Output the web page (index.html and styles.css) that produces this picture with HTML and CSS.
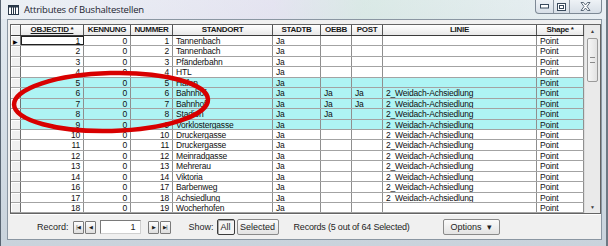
FILE: index.html
```html
<!DOCTYPE html>
<html lang="de">
<head>
    <meta charset="UTF-8">
    <title>Attributes of Bushaltestellen</title>
    <link rel="stylesheet" href="styles.css">
</head>
<body>

    <div class="window">
        <!-- Title bar -->
        <div class="titlebar">
            <svg class="app-icon" width="11" height="10" viewBox="0 0 11 10">
                <rect x="0.5" y="0.5" width="10" height="9" fill="#fff" stroke="#2b3a4a"/>
                <rect x="0.5" y="0.5" width="10" height="2" fill="#2b3a4a"/>
                <line x1="3.5" y1="2" x2="3.5" y2="9.5" stroke="#2b3a4a"/>
                <line x1="5.5" y1="2" x2="5.5" y2="9.5" stroke="#2b3a4a"/>
                <line x1="7.5" y1="2" x2="7.5" y2="9.5" stroke="#2b3a4a"/>
            </svg>
            <span class="title">Attributes of Bushaltestellen</span>
            <div class="caption-buttons">
                <div class="cap-btn cap-min">
                    <svg width="9" height="5" viewBox="0 0 9 5"><rect x="0.5" y="0.5" width="8" height="3.5" fill="#fff" stroke="#394a5c"/></svg>
                </div>
                <div class="cap-btn cap-max">
                    <svg width="9" height="8" viewBox="0 0 9 8"><rect x="0.5" y="0.5" width="8" height="7" fill="#fff" stroke="#394a5c"/><rect x="2.5" y="2.5" width="4" height="3" fill="none" stroke="#394a5c"/></svg>
                </div>
                <div class="cap-btn cap-close">
                    <svg width="11" height="9" viewBox="0 0 11 9"><path d="M1 0.5 L3.5 0.5 L5.5 3 L7.5 0.5 L10 0.5 L7 4.5 L10 8.5 L7.5 8.5 L5.5 6 L3.5 8.5 L1 8.5 L4 4.5 Z" fill="#fff" stroke="#394a5c" stroke-width="0.8"/></svg>
                </div>
            </div>
        </div>

        <!-- Client area -->
        <div class="client">
            <div class="grid-frame">
                <div class="grid">
                    <div class="row head">
                        <div class="cell sel"></div>
                        <div class="cell sorted">OBJECTID *</div>
                        <div class="cell">KENNUNG</div>
                        <div class="cell">NUMMER</div>
                        <div class="cell">STANDORT</div>
                        <div class="cell">STADTB</div>
                        <div class="cell">OEBB</div>
                        <div class="cell">POST</div>
                        <div class="cell">LINIE</div>
                        <div class="cell">Shape *</div>
                    </div>
                    <div class="rows" id="rows"></div>
                </div>
                <div class="vscroll">
                    <div class="sb-arrow">&#9650;</div>
                    <div class="sb-track">
                        <div class="sb-thumb"><span class="grip"></span></div>
                    </div>
                    <div class="sb-arrow">&#9660;</div>
                </div>
            </div>

            <div class="toolbar">
                <span class="label">Record:</span>
                <span class="nav-btn">|&#9664;</span>
                <span class="nav-btn">&#9664;</span>
                <span class="rec-input">1</span>
                <span class="nav-btn">&#9654;</span>
                <span class="nav-btn">&#9654;|</span>
                <span class="label show-label">Show:</span>
                <span class="tb-btn pressed">All</span>
                <span class="tb-btn sel-btn">Selected</span>
                <span class="records">Records (5 out of 64 Selected)</span>
                <span class="tb-btn options">Options &nbsp;&#9662;</span>
            </div>
        </div>
    </div>

    <!-- red marker drawn over the table -->
    <svg class="marker" width="608" height="246" viewBox="0 0 608 246">
        <ellipse cx="111" cy="102" rx="97" ry="29" fill="none" stroke="#d80000" stroke-width="4.5" transform="rotate(-1.5 111 102)"/>
    </svg>

    <script>
        var data = [
            [1, 0, 1, "Tannenbach", "Ja", "", "", "", "Point"],
            [2, 0, 2, "Tannenbach", "Ja", "", "", "", "Point"],
            [3, 0, 3, "Pfänderbahn", "Ja", "", "", "", "Point"],
            [4, 0, 4, "HTL", "Ja", "", "", "", "Point"],
            [5, 0, 5, "Hafen", "Ja", "", "", "", "Point"],
            [6, 0, 6, "Bahnhof", "Ja", "Ja", "Ja", "2_Weidach-Achsiedlung", "Point"],
            [7, 0, 7, "Bahnhof", "Ja", "Ja", "Ja", "2_Weidach-Achsiedlung", "Point"],
            [8, 0, 8, "Stadion", "Ja", "Ja", "", "2_Weidach-Achsiedlung", "Point"],
            [9, 0, 9, "Vorklostergasse", "Ja", "", "", "2_Weidach-Achsiedlung", "Point"],
            [10, 0, 10, "Druckergasse", "Ja", "", "", "2_Weidach-Achsiedlung", "Point"],
            [11, 0, 11, "Druckergasse", "Ja", "", "", "2_Weidach-Achsiedlung", "Point"],
            [12, 0, 12, "Meinradgasse", "Ja", "", "", "2_Weidach-Achsiedlung", "Point"],
            [13, 0, 13, "Mehrerau", "Ja", "", "", "2_Weidach-Achsiedlung", "Point"],
            [14, 0, 14, "Viktoria", "Ja", "", "", "2_Weidach-Achsiedlung", "Point"],
            [16, 0, 17, "Barbenweg", "Ja", "", "", "2_Weidach-Achsiedlung", "Point"],
            [17, 0, 18, "Achsiedlung", "Ja", "", "", "2_Weidach-Achsiedlung", "Point"],
            [18, 0, 19, "Wocherhofen", "Ja", "", "", "", "Point"],
            ["", "", "", "", "", "", "", "", ""]
        ];
        var selected = [5, 6, 7, 8, 9];

        var html = "";
        data.forEach(function(r, i) {
            var cls = "row" + (selected.indexOf(r[0]) >= 0 ? " picked" : "");
            html += '<div class="' + cls + '">' +
                '<div class="cell sel">' + (i === 0 ? '<span class="cur">&#9654;</span>' : '') + '</div>' +
                '<div class="cell num' + (i === 0 ? ' focus' : '') + '">' + r[0] + '</div>' +
                '<div class="cell num">' + r[1] + '</div>' +
                '<div class="cell num">' + r[2] + '</div>' +
                '<div class="cell">' + r[3] + '</div>' +
                '<div class="cell">' + r[4] + '</div>' +
                '<div class="cell">' + r[5] + '</div>' +
                '<div class="cell">' + r[6] + '</div>' +
                '<div class="cell">' + r[7] + '</div>' +
                '<div class="cell">' + r[8] + '</div>' +
                '</div>';
        });
        document.getElementById("rows").innerHTML = html;
    </script>

</body>
</html>
```

FILE: styles.css
```css
body {
    margin: 0;
    font-family: "Liberation Sans", Arial, sans-serif;
    position: relative;
    width: 608px;
    height: 246px;
    overflow: hidden;
}

.window {
    width: 608px;
    height: 246px;
    box-sizing: border-box;
    display: flex;
    flex-direction: column;
    background: linear-gradient(180deg, #e4ebf1 0%, #d8e1e9 40%, #c9d3dc 100%);
    border-left: 1px solid #596572;
    border-right: 2px solid #6d7883;
}

/* Title bar */
.titlebar {
    height: 19px;
    display: flex;
    align-items: center;
    padding-left: 7px;
    background: linear-gradient(90deg, rgba(255,255,255,0.3) 0%, rgba(230,215,240,0.35) 45%, rgba(200,230,210,0.35) 60%, rgba(255,255,255,0.2) 100%);
}

.app-icon {
    margin-right: 5px;
}

.title {
    font-family: "Open Sans", "Liberation Sans", sans-serif;
    font-size: 9.5px;
    letter-spacing: -0.2px;
    color: #1c2430;
}

.caption-buttons {
    margin-left: auto;
    margin-right: 4px;
    align-self: flex-start;
    display: flex;
    height: 13px;
    border: 1px solid #7d8995;
    border-top: none;
    border-radius: 0 0 4px 4px;
    background: linear-gradient(180deg, #eef2f6, #d7dfe7);
}

.cap-btn {
    display: flex;
    align-items: center;
    justify-content: center;
}

.cap-min {
    width: 17px;
    border-right: 1px solid #8994a0;
}

.cap-max {
    width: 15px;
    border-right: 1px solid #8994a0;
}

.cap-close {
    width: 31px;
}

/* Client area */
.client {
    flex: 1;
    margin: 0 4px 6px 6px;
    border: 1px solid #8a96a2;
    background: #f0f0f0;
    display: flex;
    flex-direction: column;
    padding: 4px 0 0 2px;
}

.grid-frame {
    height: 190px;
    box-sizing: border-box;
    border: 1px solid #646464;
    background: #fff;
    display: flex;
    overflow: hidden;
}

.grid {
    width: 573px;
    overflow: hidden;
}

.rows {
    height: 178px;
    overflow: hidden;
}

.row {
    display: grid;
    grid-template-columns: 10px 63px 47px 42px 100px 48px 31px 31px 154px 47px;
    height: 10.45px;
    box-sizing: border-box;
    border-bottom: 1px solid #a3a3a3;
    font-size: 8.5px;
    letter-spacing: -0.2px;
    line-height: 10px;
    color: #101010;
}

.row.picked {
    background: #aef4f4;
}

.cell {
    border-right: 1px solid #8f8f8f;
    padding: 0 3px;
    white-space: nowrap;
    overflow: hidden;
}

.cell.num {
    text-align: right;
}

.cell.sel {
    padding: 0;
    background: #f0f0f0;
    border-right: 1px solid #707070;
    box-shadow: inset 1px 1px 0 #fff;
    position: relative;
}

.cell.focus {
    outline: 1px solid #202020;
    outline-offset: -1px;
}

.cur {
    position: absolute;
    left: 2px;
    top: 1px;
    font-size: 6px;
    color: #000;
}

.row.head {
    height: 11px;
    border-bottom: 1px solid #3a3a3a;
    font-size: 8px;
    font-weight: bold;
    letter-spacing: -0.3px;
    line-height: 10px;
    color: #1a1a1a;
}

.row.head .cell {
    text-align: center;
    background: linear-gradient(180deg, #ffffff, #e8e8e8);
    border-right: 1px solid #555;
}

.row.head .cell.sel {
    background: #f0f0f0;
}

.row.head .cell.sorted {
    text-decoration: underline;
}

/* Vertical scroll bar */
.vscroll {
    flex: 1;
    display: flex;
    flex-direction: column;
    background: #eaeaea;
    border-left: 1px solid #dcdcdc;
}

.sb-arrow {
    height: 12px;
    font-size: 5px;
    color: #404040;
    display: flex;
    align-items: center;
    justify-content: center;
}

.sb-track {
    flex: 1;
    padding: 1px 2px;
}

.sb-thumb {
    height: 42px;
    border: 1px solid #9a9a9a;
    border-radius: 2px;
    background: linear-gradient(90deg, #f6f6f6, #e2e2e2);
    display: flex;
    align-items: center;
    justify-content: center;
}

.grip {
    width: 5px;
    height: 4px;
    border-top: 1px solid #8a8a8a;
    border-bottom: 1px solid #8a8a8a;
}

/* Bottom toolbar */
.toolbar {
    flex: 1;
    display: flex;
    align-items: center;
    padding-left: 27px;
    font-size: 9px;
    color: #1e1e1e;
    border-top: 1px solid #fff;
}

.label {
    margin-right: 4px;
}

.nav-btn {
    width: 11px;
    height: 13px;
    box-sizing: border-box;
    border: 1px solid #7a7a7a;
    border-radius: 1px;
    background: linear-gradient(180deg, #fdfdfd, #dedede);
    font-size: 5px;
    letter-spacing: -1px;
    display: flex;
    align-items: center;
    justify-content: center;
    margin-right: 1px;
}

.rec-input {
    width: 41px;
    height: 14px;
    box-sizing: border-box;
    border: 1px solid #7a7a7a;
    border-right-color: #d0d0d0;
    border-bottom-color: #d0d0d0;
    background: #fff;
    text-align: right;
    padding-right: 4px;
    line-height: 12px;
    margin: 0 7px 0 3px;
}

.show-label {
    margin-left: 17px;
    margin-right: 3px;
}

.tb-btn {
    height: 16px;
    box-sizing: border-box;
    border: 1px solid #8a8a8a;
    border-radius: 2px;
    background: linear-gradient(180deg, #fbfbfb, #e3e3e3);
    line-height: 14px;
    text-align: center;
    margin-right: 2px;
}

.tb-btn.pressed {
    width: 18px;
    background: #f4f4f4;
    border-color: #3c3c3c;
    box-shadow: inset 1px 1px 0 #aaa;
}

.tb-btn.sel-btn {
    width: 42px;
}

.records {
    margin-left: 13px;
    width: 149px;
    letter-spacing: -0.2px;
}

.tb-btn.options {
    width: 57px;
}

.marker {
    position: absolute;
    left: 0;
    top: 0;
    pointer-events: none;
}
```
